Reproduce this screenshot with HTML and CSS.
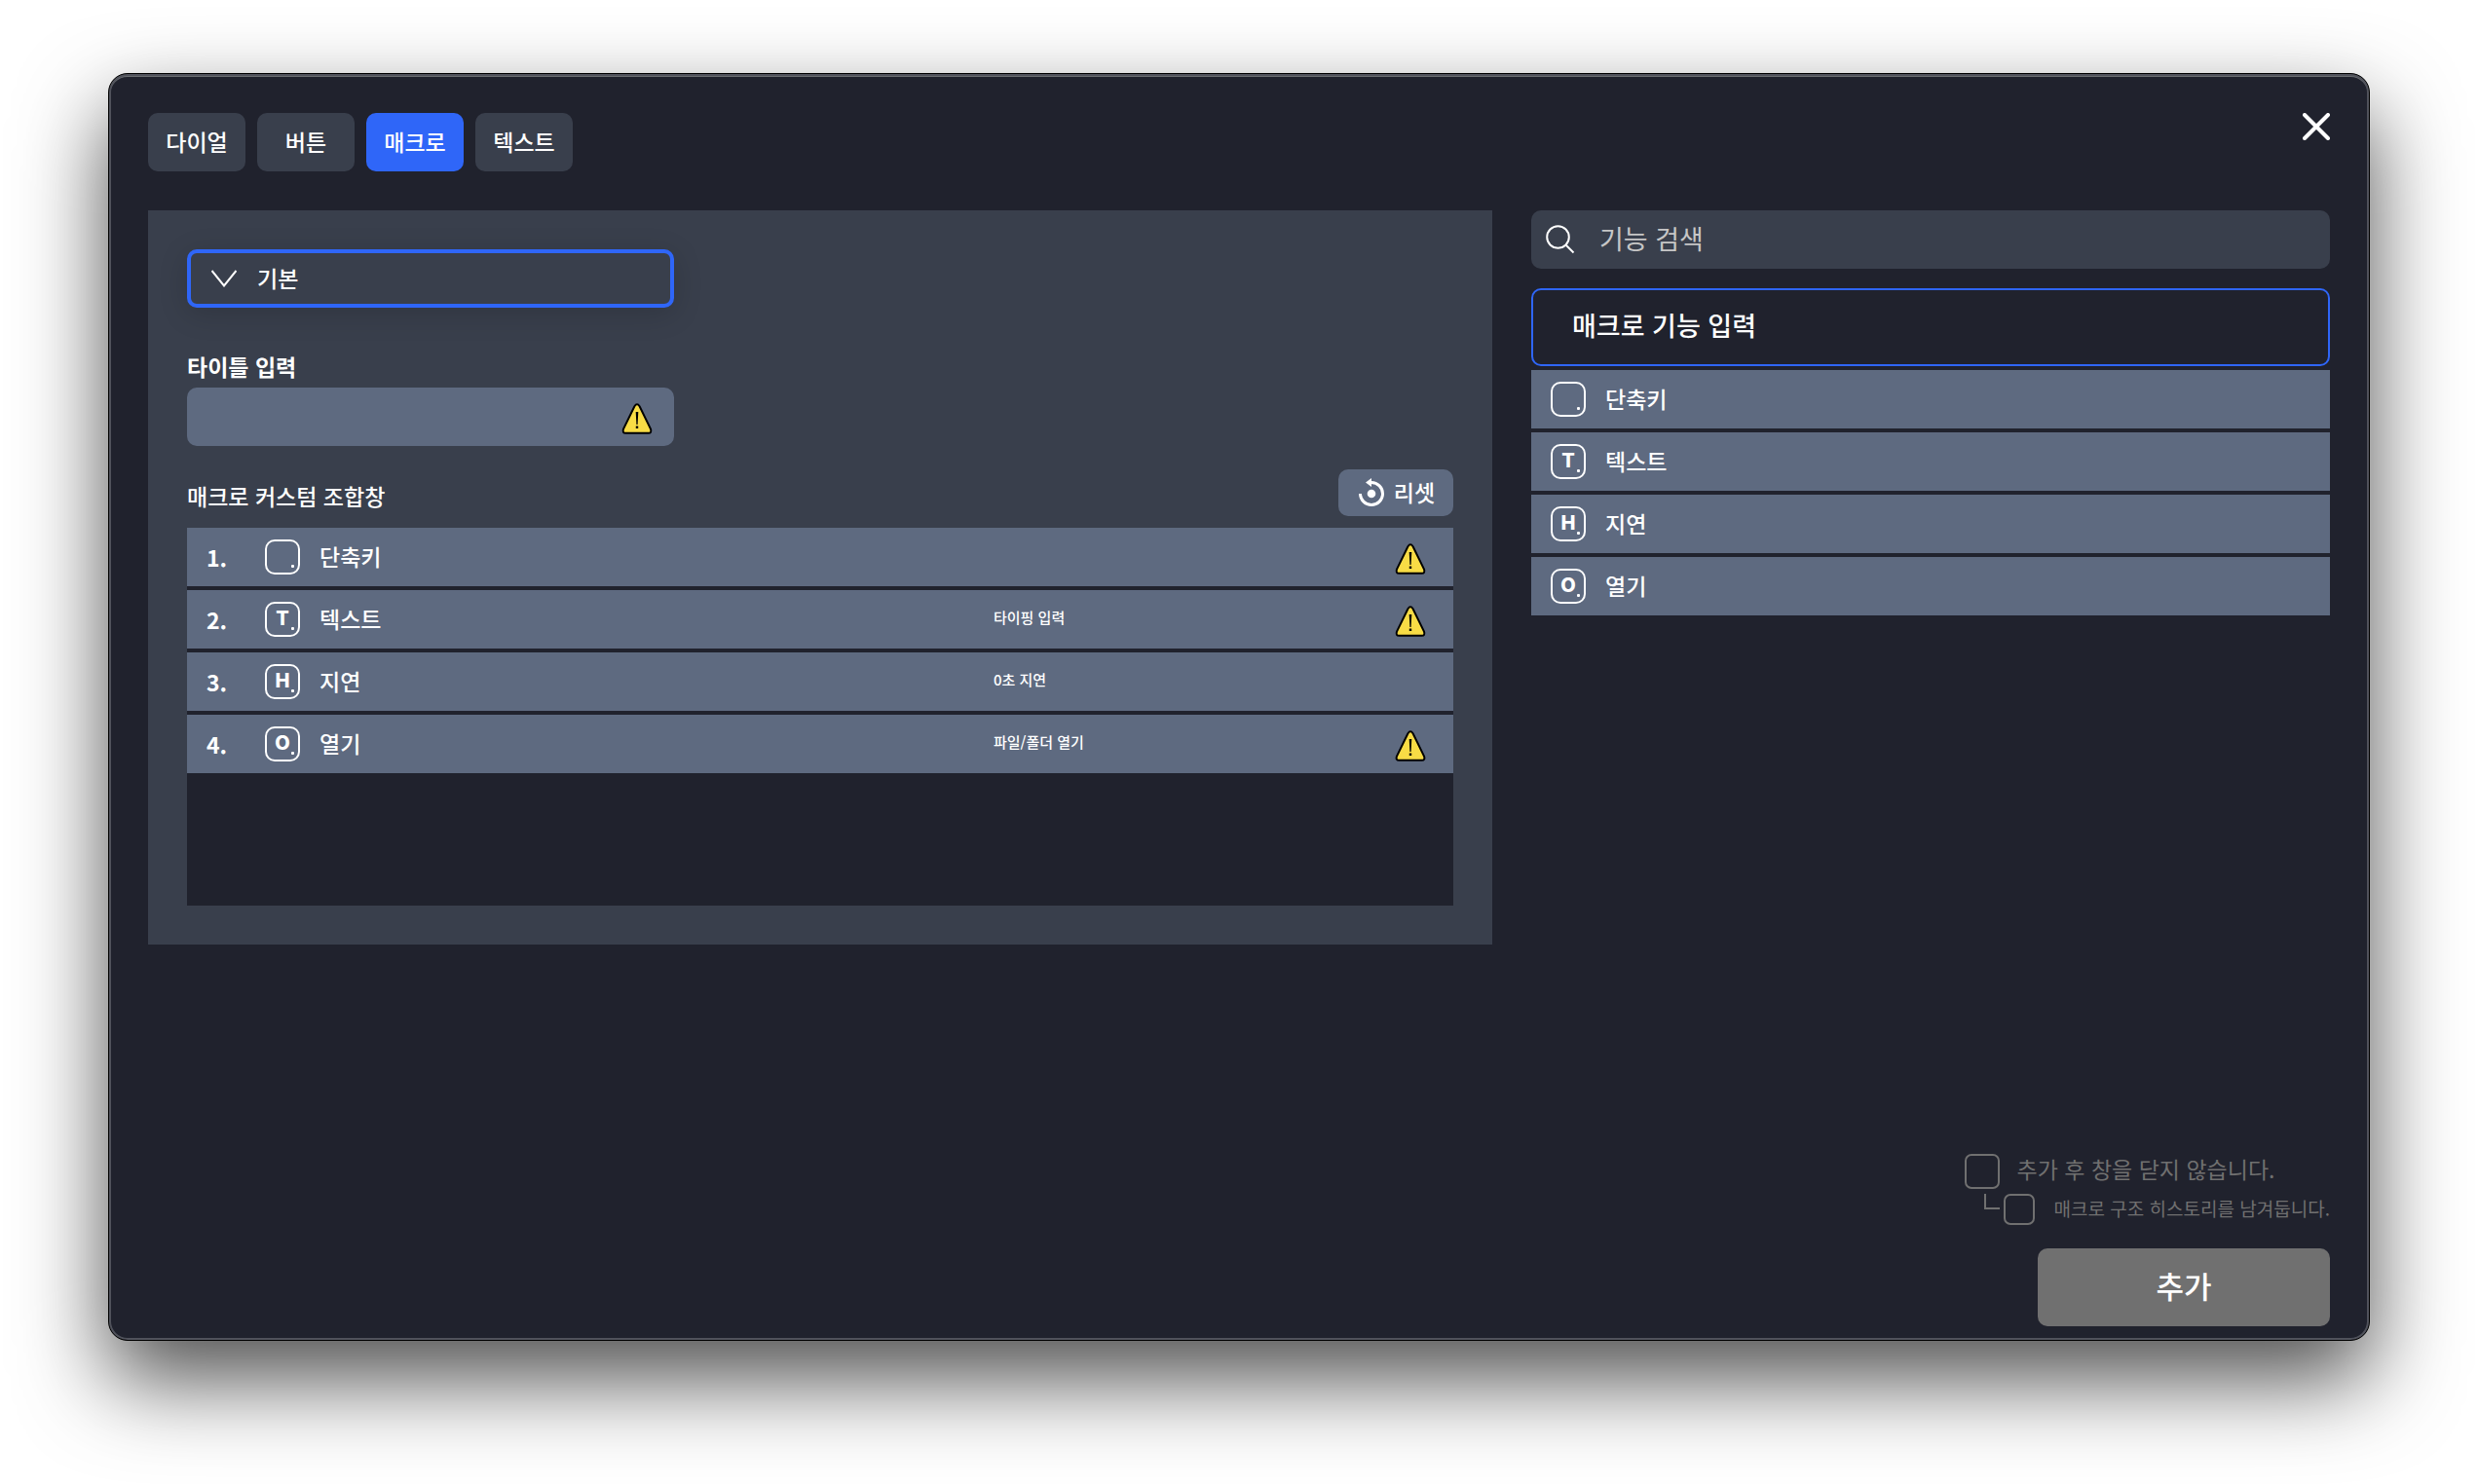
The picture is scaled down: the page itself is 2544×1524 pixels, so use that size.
FILE: index.html
```html
<!DOCTYPE html>
<html lang="ko">
<head>
<meta charset="utf-8">
<meta name="viewport" content="width=device-width, initial-scale=1">
<title>매크로</title>
<link rel="stylesheet" href="styles.css">
</head>
<body>
<svg class="sprite" aria-hidden="true">
  <symbol id="warning" viewBox="0 0 32 32">
    <path d="M13.4 3.2 Q16 -0.6 18.6 3.2 L30 26.6 Q31.4 30.6 27.6 30.8 H4.4 Q0.6 30.6 2 26.6 Z" fill="#f8dc45" stroke="#000" stroke-width="2"/>
    <path d="M14.7 9 H17.3 L16.6 22 H15.4 Z M14.8 23.6 H17.2 V26 H14.8 Z" fill="#000"/>
  </symbol>
</svg>
<main class="window">
  <header class="topbar">
    <nav class="tabs">
      <button class="tab" type="button">다이얼</button>
      <button class="tab" type="button">버튼</button>
      <button class="tab tab-active" type="button" aria-current="true">매크로</button>
      <button class="tab" type="button">텍스트</button>
    </nav>
    <button class="close" type="button" aria-label="닫기">
      <svg viewBox="0 0 28 28" width="28" height="28"><path d="M2 2 26 26 M26 2 2 26" stroke="#fff" stroke-width="4" stroke-linecap="round"/></svg>
    </button>
  </header>

  <div class="content">
    <section class="editor">
      <div class="select-box">
        <svg class="chevron" viewBox="0 0 26 18" width="26" height="18"><path d="M0.5 1 13 16.5 25.5 1" fill="none" stroke="#fff" stroke-width="2"/></svg>
        <select class="select" aria-label="종류"><option>기본</option></select>
      </div>

      <label class="field-label" for="title">타이틀 입력</label>
      <div class="field">
        <input class="field-input" id="title" type="text">
        <svg class="warning" width="32" height="32"><use href="#warning"/></svg>
      </div>

      <div class="list-head">
        <h2 class="list-title">매크로 커스텀 조합창</h2>
        <button class="reset" type="button">
          <svg viewBox="0 0 26 30" width="26" height="30"><path d="M13 4.5 A11.5 11.5 0 1 1 1.5 16" fill="none" stroke="#fff" stroke-width="3"/><path d="M7 4.5 13 0 V9 Z" fill="#fff"/><circle cx="13" cy="16" r="4.3" fill="#fff"/></svg>
          <span class="text">리셋</span>
        </button>
      </div>

      <ol class="macro">
        <li class="step"><span class="num">1.</span><span class="key"></span><span class="text">단축키</span><span class="note"></span><svg class="warning" width="32" height="32"><use href="#warning"/></svg></li>
        <li class="step"><span class="num">2.</span><span class="key">T</span><span class="text">텍스트</span><span class="note">타이핑 입력</span><svg class="warning" width="32" height="32"><use href="#warning"/></svg></li>
        <li class="step"><span class="num">3.</span><span class="key">H</span><span class="text">지연</span><span class="note">0초 지연</span></li>
        <li class="step"><span class="num">4.</span><span class="key">O</span><span class="text">열기</span><span class="note">파일/폴더 열기</span><svg class="warning" width="32" height="32"><use href="#warning"/></svg></li>
      </ol>
    </section>

    <aside class="library">
      <label class="search">
        <svg viewBox="0 0 30 30" width="30" height="30"><circle cx="12.5" cy="12.5" r="11.3" fill="none" stroke="#fff" stroke-width="2"/><path d="M20.5 20.5 28.5 28.5" stroke="#fff" stroke-width="2"/></svg>
        <input class="search-input" type="search" placeholder="기능 검색" aria-label="기능 검색">
      </label>
      <button class="group" type="button">매크로 기능 입력</button>
      <div class="actions">
        <button class="action" type="button"><span class="key"></span><span class="text">단축키</span></button>
        <button class="action" type="button"><span class="key">T</span><span class="text">텍스트</span></button>
        <button class="action" type="button"><span class="key">H</span><span class="text">지연</span></button>
        <button class="action" type="button"><span class="key">O</span><span class="text">열기</span></button>
      </div>
    </aside>
  </div>

  <footer class="footer">
    <div class="options">
      <label class="option"><input class="check" type="checkbox" disabled><span class="option-text">추가 후 창을 닫지 않습니다.</span></label>
      <label class="option option-sub"><span class="branch"></span><input class="check check-small" type="checkbox" disabled><span class="text">매크로 구조 히스토리를 남겨둡니다.</span></label>
    </div>
    <button class="submit" type="button" disabled>추가</button>
  </footer>
</main>
</body>
</html>
```
FILE: styles.css
```css
:root {
  --bg: #20222d;
  --panel: #393f4c;
  --row: #5e6a80;
  --accent: #2f66f8;
  --muted: #707070;
}

* { box-sizing: border-box; }

body {
  margin: 0;
  min-height: 100vh;
  padding: 75px 111px 147px;
  display: flex;
  background: #fff;
  color: #fff;
  font: 500 23px/32px "Noto Sans CJK KR", sans-serif;
}

button, input, select {
  margin: 0;
  padding: 0;
  border: 0;
  border-radius: 0;
  background: none;
  color: inherit;
  font: inherit;
}

svg { display: block; flex: none; }
.sprite { display: none; }

.window {
  flex: 1;
  min-width: 0;
  display: flex;
  flex-direction: column;
  padding: 40px 40px 14px;
  border: 1px solid #000;
  border-radius: 20px;
  background: var(--bg);
  box-shadow: inset 0 0 0 2px #50525b, inset 0 2px 0 1px #6a6d70, 0 40px 90px rgba(0, 0, 0, 0.69);
}

.topbar {
  display: flex;
  justify-content: space-between;
  align-items: flex-start;
}

.tabs { display: flex; gap: 12px; }

.tab {
  width: 100px;
  height: 60px;
  padding-bottom: 2px;
  border-radius: 10px;
  background: var(--panel);
}

.tab-active { background: var(--accent); }

.content {
  display: grid;
  grid-template-columns: minmax(0, 1380fr) minmax(0, 820fr);
  gap: 40px;
  align-items: start;
  margin-top: 40px;
}

.editor {
  padding: 40px;
  background: var(--panel);
}

.select-box {
  display: flex;
  align-items: center;
  gap: 21px;
  max-width: 500px;
  height: 60px;
  padding-left: 21px;
  border: 4px solid var(--accent);
  border-radius: 10px;
  box-shadow: 0 6px 30px rgba(0, 0, 0, 0.16);
}

.select {
  flex: 1;
  height: 100%;
  padding-bottom: 2px;
  appearance: none;
}

.field-label {
  display: block;
  margin-top: 44px;
  font-weight: 700;
}

.field {
  display: flex;
  align-items: center;
  max-width: 500px;
  height: 60px;
  margin-top: 6px;
  padding: 4px 22px 0 20px;
  border-radius: 10px;
  background: var(--row);
}

.field-input { flex: 1; min-width: 0; height: 100%; }

.list-head {
  display: flex;
  justify-content: space-between;
  align-items: center;
  margin: 24px 0 12px;
}

.list-title { margin: 6px 0 0; font: inherit; }

.reset {
  display: flex;
  align-items: center;
  justify-content: center;
  gap: 10px;
  width: 118px;
  height: 48px;
  padding-left: 2px;
  border-radius: 10px;
  background: var(--row);
}

.macro {
  display: flex;
  flex-direction: column;
  gap: 4px;
  min-height: 388px;
  margin: 0;
  padding: 0;
  background: var(--bg);
  list-style: none;
}

.step {
  display: grid;
  grid-template-columns: 60px 56px minmax(0, 1fr) 412px 32px;
  align-items: center;
  height: 60px;
  padding: 0 28px 0 20px;
  background: var(--row);
}

.step .warning { margin-top: 4px; }
.num { font-weight: 700; }
.text { padding-bottom: 2px; }
.note { padding-bottom: 4px; font-size: 15px; line-height: 20px; }

.key {
  position: relative;
  flex: none;
  width: 36px;
  height: 36px;
  border: 2px solid #fff;
  border-radius: 10px;
  font: 800 20px/31px Inter, sans-serif;
  text-align: center;
}

.key::after {
  content: "";
  position: absolute;
  right: 4px;
  bottom: 5px;
  width: 3px;
  height: 3px;
  border-radius: 1px;
  background: #fff;
}

.search {
  display: flex;
  align-items: center;
  gap: 25px;
  height: 60px;
  padding: 0 15px;
  border-radius: 10px;
  background: var(--panel);
  font-size: 27px;
  font-weight: 400;
}

.search-input { flex: 1; min-width: 0; padding-bottom: 2px; appearance: none; }
.search-input::placeholder { color: #c6c6c6; opacity: 1; }

.group {
  display: block;
  width: 100%;
  height: 80px;
  margin-top: 20px;
  padding: 0 0 4px 40px;
  border: 2px solid var(--accent);
  border-radius: 10px;
  font-size: 27px;
  text-align: left;
}

.actions {
  display: flex;
  flex-direction: column;
  gap: 4px;
  margin-top: 4px;
}

.action {
  display: flex;
  align-items: center;
  gap: 20px;
  height: 60px;
  padding: 0 20px;
  background: var(--row);
}

.footer {
  display: flex;
  flex-direction: column;
  align-items: flex-end;
  gap: 24px;
  margin-top: auto;
}

.options {
  display: flex;
  flex-direction: column;
  gap: 4px;
  color: var(--muted);
  font-weight: 400;
}

.option { display: flex; align-items: center; gap: 18px; }
.option-text { padding-bottom: 6px; }

.option-sub {
  gap: 20px;
  padding-left: 20px;
  font-size: 19px;
}

.check {
  appearance: none;
  flex: none;
  width: 36px;
  height: 36px;
  border: 2px solid var(--muted);
  border-radius: 7px;
}

.check-small { width: 32px; height: 32px; }
.option-sub .text { line-height: 30px; }

.branch {
  align-self: flex-start;
  width: 16px;
  height: 16px;
  margin-right: -16px;
  border: solid var(--muted);
  border-width: 0 0 2px 2px;
}

.submit {
  width: 300px;
  height: 80px;
  padding-bottom: 4px;
  border-radius: 10px;
  background: var(--muted);
  font-size: 31px;
}
```
